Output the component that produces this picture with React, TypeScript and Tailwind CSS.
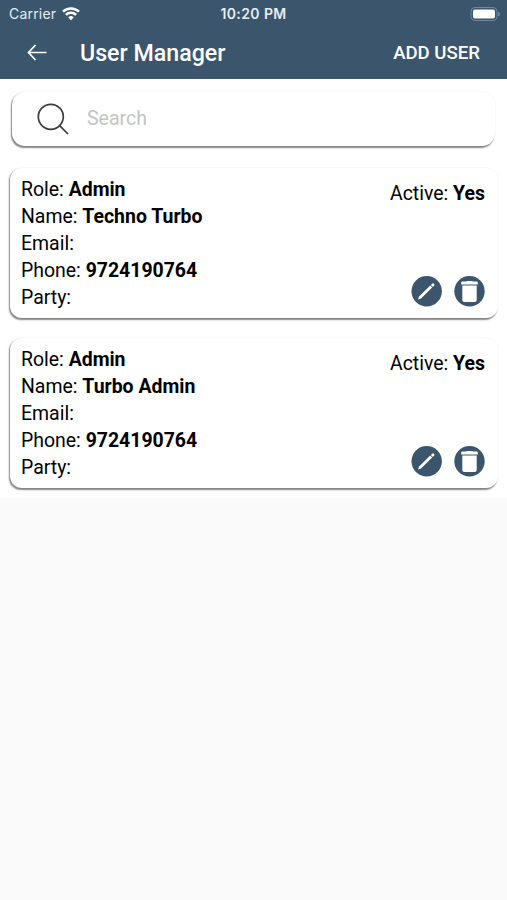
const users = [
  { id: 1, role: "Admin", name: "Techno Turbo", email: "", phone: "9724190764", party: "" },
  { id: 2, role: "Admin", name: "Turbo Admin", email: "", phone: "9724190764", party: "" },
];

type User = (typeof users)[number];

const StatusBar = () => {
  return (
    <div className="flex h-[27px] items-center justify-between pl-[9px] pr-[9px] text-[#e6edf3]">
      <div className="flex w-[120px] items-center gap-[6px]">
        <span className="font-['Inter',sans-serif] text-[14px] leading-none tracking-[0.2px]">
          Carrier
        </span>
        <svg width="18" height="14" viewBox="0 0 18 14" fill="none" stroke="#fff" strokeWidth="2.5">
          <path d="M1 4.7a11.3 11.3 0 0 1 16 0" />
          <path d="M3.9 7.8a7.2 7.2 0 0 1 10.2 0" />
          <path d="M9 13.3 6.2 10.4a4 4 0 0 1 5.6 0z" fill="#fff" stroke="none" />
        </svg>
      </div>
      <span className="pt-px font-['Inter',sans-serif] text-[14px] font-semibold leading-none tracking-[0.4px]">
        10:20 PM
      </span>
      <div className="flex w-[120px] justify-end">
        <svg className="-mr-[3px]" width="31" height="14" viewBox="0 0 31 14">
          <rect x="1" y="0.5" width="26" height="13" rx="4" fill="none" stroke="#71879a" />
          <rect x="3" y="2.5" width="22" height="9" rx="2" fill="#fff" />
          <path d="M28.3 4.7a2.5 2.5 0 0 1 0 4.6z" fill="#8b9dac" />
        </svg>
      </div>
    </div>
  );
};

const Header = () => {
  return (
    <header className="h-[79px] bg-[#3b566c]">
      <StatusBar />
      <div className="flex h-[51px] items-center pl-[27px] pr-[27px] text-white">
        <button aria-label="Back">
          <svg width="21" height="18" viewBox="0 0 21 18" fill="none" stroke="#fff" strokeWidth="1.7">
            <path d="M19.5 8.5H1.8M8.5 1 1.5 8.5l7 7.5" />
          </svg>
        </button>
        <h1 className="ml-[32px] pt-[2px] text-[23.2px] font-medium leading-none">
          User Manager
        </h1>
        <button className="ml-auto pt-px text-[18.6px] font-medium leading-none">
          ADD USER
        </button>
      </div>
    </header>
  );
};

const SearchBar = () => {
  return (
    <div className="mx-3 flex h-[54px] items-center rounded-[13px] bg-white pl-[25px] shadow-[-1px_1.5px_1.5px_rgba(0,0,0,0.47),0_0_2px_rgba(0,0,0,0.06)]">
      <svg width="32" height="32" viewBox="0 0 32 32" fill="none" stroke="#3c3c3c" strokeWidth="1.7">
        <circle cx="13.8" cy="13.8" r="12.5" />
        <path d="m22.6 22.6 8.4 8.4" />
      </svg>
      <input
        className="ml-[18px] w-80 text-[19.5px] outline-none placeholder:text-[#c4c4c4]"
        placeholder="Search"
      />
    </div>
  );
};

const Field = ({ label, value }: { label: string; value: string }) => {
  return (
    <p>
      {label}: <b className="font-bold">{value}</b>
    </p>
  );
};

const EditIcon = () => {
  return (
    <svg width="31" height="31" viewBox="0 0 31 31">
      <circle cx="15.7" cy="15.2" r="15.2" fill="#3b566c" />
      <path d="m7 23.6 1.1-3.1L19.2 9.6l2 2L10 22.5z" fill="#fff" />
      <path d="m19.9 9 1.2-1.3q.8-.7 1.5-.1l.6.6q.7.7 0 1.4l-1.3 1.3z" fill="#fff" />
    </svg>
  );
};

const DeleteIcon = () => {
  return (
    <svg width="31" height="31" viewBox="0 0 31 31">
      <circle cx="15.5" cy="15.2" r="15.2" fill="#3b566c" />
      <path d="M7.2 8.4V6.4q0-1 1-1h4.3V5h6v.4h4.3q1 0 1 1v2z" fill="#fff" />
      <path d="M8.3 9.4h14.4v14.7q0 2-2 2H10.3q-2 0-2-2z" fill="#fff" />
    </svg>
  );
};

const UserCard = ({ user }: { user: User }) => {
  return (
    <div className="flex h-[150px] justify-between rounded-[12px] bg-white pb-[11px] pl-[11px] pr-[13px] pt-2 text-[19.45px] leading-[27px] text-black shadow-[-1px_1.5px_1.5px_rgba(0,0,0,0.47),0_0_2px_rgba(0,0,0,0.06)]">
      <div>
        <Field label="Role" value={user.role} />
        <Field label="Name" value={user.name} />
        <Field label="Email" value={user.email} />
        <Field label="Phone" value={user.phone} />
        <Field label="Party" value={user.party} />
      </div>
      <div className="flex flex-col items-end justify-between pt-1">
        <Field label="Active" value="Yes" />
        <div className="flex gap-3">
          <button aria-label="Edit">
            <EditIcon />
          </button>
          <button aria-label="Delete">
            <DeleteIcon />
          </button>
        </div>
      </div>
    </div>
  );
};

export default function App() {
  return (
    <div className="min-h-screen bg-[#fafafa] font-['Roboto',sans-serif]">
      <Header />
      <main className="h-[419px] bg-white pt-[13px]">
        <SearchBar />
        <div className="mt-[22px] flex flex-col gap-5 pl-[10px] pr-[9px]">
          {users.map((user) => (
            <UserCard key={user.id} user={user} />
          ))}
        </div>
      </main>
    </div>
  );
}
